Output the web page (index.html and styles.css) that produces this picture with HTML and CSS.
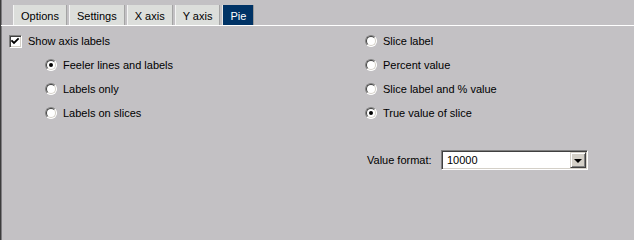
FILE: index.html
```html
<!DOCTYPE html>
<html>
<head>
<meta charset="utf-8">
<link rel="stylesheet" href="styles.css">
</head>
<body>
<div class="frame">
  <div class="tabs">
    <div class="tab">Options</div>
    <div class="tab">Settings</div>
    <div class="tab">X axis</div>
    <div class="tab">Y axis</div>
    <div class="tab active">Pie</div>
  </div>
  <div class="panel">
    <div class="col left">
      <div class="row">
        <span class="check"><svg width="9" height="9" viewBox="0 0 9 9"><polyline points="1,4 3,6 7,2" fill="none" stroke="#000" stroke-width="1.8" stroke-linecap="square"/></svg></span>
        <span class="lbl check-lbl">Show axis labels</span>
      </div>
      <div class="row indent">
        <span class="radio on"></span><span class="lbl">Feeler lines and labels</span>
      </div>
      <div class="row indent">
        <span class="radio"></span><span class="lbl">Labels only</span>
      </div>
      <div class="row indent">
        <span class="radio"></span><span class="lbl">Labels on slices</span>
      </div>
    </div>
    <div class="col right">
      <div class="row">
        <span class="radio"></span><span class="lbl">Slice label</span>
      </div>
      <div class="row">
        <span class="radio"></span><span class="lbl">Percent value</span>
      </div>
      <div class="row">
        <span class="radio"></span><span class="lbl">Slice label and % value</span>
      </div>
      <div class="row">
        <span class="radio on"></span><span class="lbl">True value of slice</span>
      </div>
      <div class="format">
        <span class="format-lbl">Value format:</span>
        <div class="select">
          <span class="select-val">10000</span>
          <span class="select-btn"><span class="arrow"></span></span>
        </div>
      </div>
    </div>
  </div>
</div>
</body>
</html>
```
FILE: styles.css
```css
html, body {
  margin: 0;
  padding: 0;
  background: #c3c1c4;
  height: 100%;
}
body {
  font-family: "Liberation Sans", Arial, sans-serif;
  font-size: 11px;
  color: #000;
}
.frame {
  width: 634px;
  min-height: 100%;
  box-sizing: border-box;
  border-left: 1px solid #3c3c3c;
  box-shadow: inset 1px 0 #7e7c80;
}
.tabs {
  display: flex;
  gap: 2px;
  padding: 5px 0 0 12px;
  border-bottom: 1px solid #ffffff;
}
.tab {
  height: 18px;
  line-height: 18px;
  padding: 2px 7px 0;
  background: #dcdedb;
  border-left: 1px solid #f4f4f4;
  border-right: 1px solid #a4a4a4;
  white-space: nowrap;
}
.tab.active {
  background: #003366;
  color: #ffffff;
  border-left-color: #e8e8e8;
  border-right-color: #9a9a9a;
}
.panel {
  display: grid;
  grid-template-columns: 364px 1fr;
  padding-top: 3px;
}
.col.left {
  padding-left: 8px;
}
.row {
  display: flex;
  align-items: center;
  height: 24px;
}
.row.indent {
  padding-left: 36px;
}
.check {
  width: 9px;
  height: 9px;
  background: #fff;
  border: 1px solid;
  border-color: #808080 #ffffff #ffffff #808080;
  box-shadow: inset 1px 1px #404040, inset -1px -1px #d4d0c8;
  padding: 1px;
  display: flex;
  align-items: center;
  justify-content: center;
}
.check svg {
  display: block;
}
.radio {
  position: relative;
  width: 10px;
  height: 10px;
  border-radius: 50%;
  border: 1px solid;
  border-color: #808080 #ffffff #ffffff #808080;
  background: #fff;
  flex: none;
}
.radio::before {
  content: "";
  position: absolute;
  inset: 0;
  border-radius: 50%;
  border: 1px solid;
  border-color: #404040 #d4d0c8 #d4d0c8 #404040;
  box-sizing: border-box;
}
.radio.on::after {
  content: "";
  position: absolute;
  left: 3px;
  top: 3px;
  width: 4px;
  height: 4px;
  border-radius: 50%;
  background: #000;
}
.lbl {
  margin-left: 6px;
  white-space: nowrap;
}
.check-lbl {
  margin-left: 6px;
}
.format {
  display: flex;
  align-items: center;
  margin-top: 25px;
  padding-left: 2px;
}
.format-lbl {
  width: 74px;
  white-space: nowrap;
}
.select {
  width: 147px;
  height: 20px;
  box-sizing: border-box;
  border: 1px solid;
  border-color: #808080 #ffffff #ffffff #808080;
  box-shadow: inset 1px 1px #404040, inset -1px -1px #d4d0c8;
  background: #fff;
  display: flex;
  align-items: center;
  justify-content: space-between;
  padding: 1px 1px 1px 5px;
}
.select-btn {
  width: 16px;
  height: 16px;
  box-sizing: border-box;
  background: #d4d0c8;
  border: 1px solid;
  border-color: #d4d0c8 #404040 #404040 #d4d0c8;
  box-shadow: inset 1px 1px #ffffff, inset -1px -1px #808080;
  display: flex;
  align-items: center;
  justify-content: center;
}
.arrow {
  width: 0;
  height: 0;
  border-left: 4px solid transparent;
  border-right: 4px solid transparent;
  border-top: 4px solid #000;
  margin-top: 1px;
}
```
